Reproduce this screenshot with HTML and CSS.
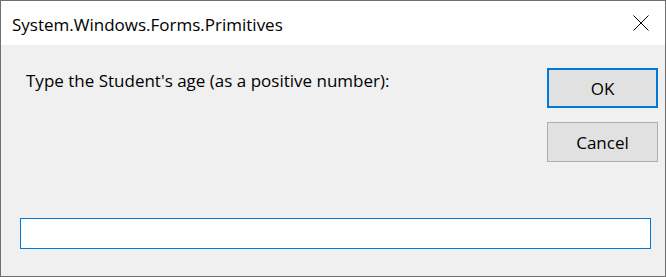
FILE: index.html
```html
<!DOCTYPE html>
<html lang="en">
<head>
    <meta charset="UTF-8">
    <meta name="viewport" content="width=device-width, initial-scale=1.0">
    <title>System.Windows.Forms.Primitives</title>
    <link rel="stylesheet" href="styles.css">
</head>
<body>

    <div class="dialog">
        <div class="titlebar">
            <span class="caption">System.Windows.Forms.Primitives</span>
            <span class="close-btn">
                <svg width="16" height="16" viewBox="0 0 16 16">
                    <path d="M0.5 0.5 L15.5 15.5 M15.5 0.5 L0.5 15.5" stroke="#000" stroke-width="1" fill="none"/>
                </svg>
            </span>
        </div>
        <div class="body">
            <div class="top">
                <label class="prompt" for="answer">Type the Student's age (as a positive number):</label>
                <div class="buttons">
                    <button class="btn default">OK</button>
                    <button class="btn">Cancel</button>
                </div>
            </div>
            <input class="answer" id="answer" type="text">
        </div>
    </div>

</body>
</html>
```

FILE: styles.css
```css
* {
    box-sizing: border-box;
}

body {
    margin: 0;
    font-family: "Open Sans", "Noto Sans", sans-serif;
    color: #000;
}

.dialog {
    width: 666px;
    height: 277px;
    border: 1px solid #6f6f6f;
    display: flex;
    flex-direction: column;
}

.titlebar {
    height: 44px;
    background: #fff;
    display: flex;
    align-items: center;
    justify-content: space-between;
    padding: 0 16px 0 11px;
}

.titlebar > .caption {
    font-size: 17px;
    padding-top: 2px;
}

.titlebar > .close-btn {
    display: flex;
    width: 16px;
    height: 16px;
}

.body {
    flex: 1;
    background: #f0f0f0;
    display: flex;
    flex-direction: column;
}

.top {
    display: flex;
    justify-content: space-between;
    padding: 23px 7px 0 25px;
}

.prompt {
    font-size: 17px;
    padding-top: 1px;
}

.buttons {
    display: flex;
    flex-direction: column;
    gap: 14px;
}

.btn {
    width: 111px;
    height: 40px;
    background: #e1e1e1;
    border: 1px solid #adadad;
    font-family: inherit;
    font-size: 17px;
    color: #000;
    padding: 0;
}

.btn.default {
    border: 2px solid #0078d7;
}

.answer {
    margin: auto 14px 27px 19px;
    height: 31px;
    border: 1px solid #0078d7;
    background: #fff;
    outline: none;
    font-family: inherit;
    font-size: 17px;
}
```
